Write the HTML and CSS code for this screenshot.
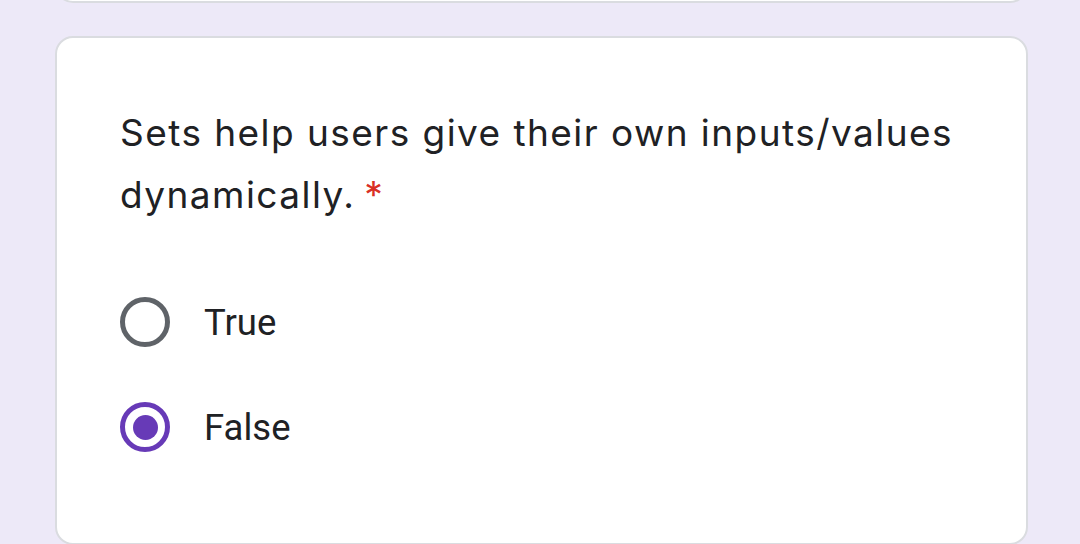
FILE: index.html
```html
<!DOCTYPE html>
<html>
<head>
<meta charset="utf-8">
<link rel="stylesheet" href="styles.css">
</head>
<body>
<div class="page">
  <div class="card card-prev"></div>
  <div class="card">
    <div class="question"><span class="qtext">Sets help users give their own inputs/values dynamically.</span><span class="req">*</span></div>
    <div class="options">
      <label class="option">
        <span class="radio"></span>
        <span class="label">True</span>
      </label>
      <label class="option">
        <span class="radio checked"></span>
        <span class="label">False</span>
      </label>
    </div>
  </div>
</div>
</body>
</html>
```
FILE: styles.css
```css
html, body {
  margin: 0;
  padding: 0;
  background: #ede9f8;
  height: 100%;
  overflow: hidden;
}
.page {
  width: 973px;
  margin-left: 55px;
  display: flex;
  flex-direction: column;
  gap: 33px;
}
.card {
  background: #fff;
  border: 2px solid #dadce0;
  border-radius: 18px;
  box-sizing: border-box;
}
.card-prev {
  height: 60px;
  margin-top: -57px;
}
.card:not(.card-prev) {
  height: 509px;
  padding: 64px 64px 0 63px;
}
.question {
  font-family: Inter, "Open Sans", sans-serif;
  font-size: 37px;
  line-height: 62px;
  color: #202124;
  letter-spacing: 1.45px;
}
.req {
  color: #d93025;
  margin-left: 9px;
  letter-spacing: 0;
}
.options {
  margin-top: 71px;
  display: flex;
  flex-direction: column;
  gap: 55px;
}
.option {
  display: flex;
  align-items: center;
  gap: 34px;
  height: 50px;
}
.radio {
  width: 50px;
  height: 50px;
  border: 5px solid #5f6368;
  border-radius: 50%;
  box-sizing: border-box;
  position: relative;
  flex: none;
}
.radio.checked {
  border-color: #673ab7;
}
.radio.checked::after {
  content: "";
  position: absolute;
  left: 50%;
  top: 50%;
  width: 25px;
  height: 25px;
  margin: -12.5px 0 0 -12.5px;
  border-radius: 50%;
  background: #673ab7;
}
.label {
  font-family: Roboto, "Liberation Sans", sans-serif;
  font-size: 36.5px;
  color: #202124;
}
```
